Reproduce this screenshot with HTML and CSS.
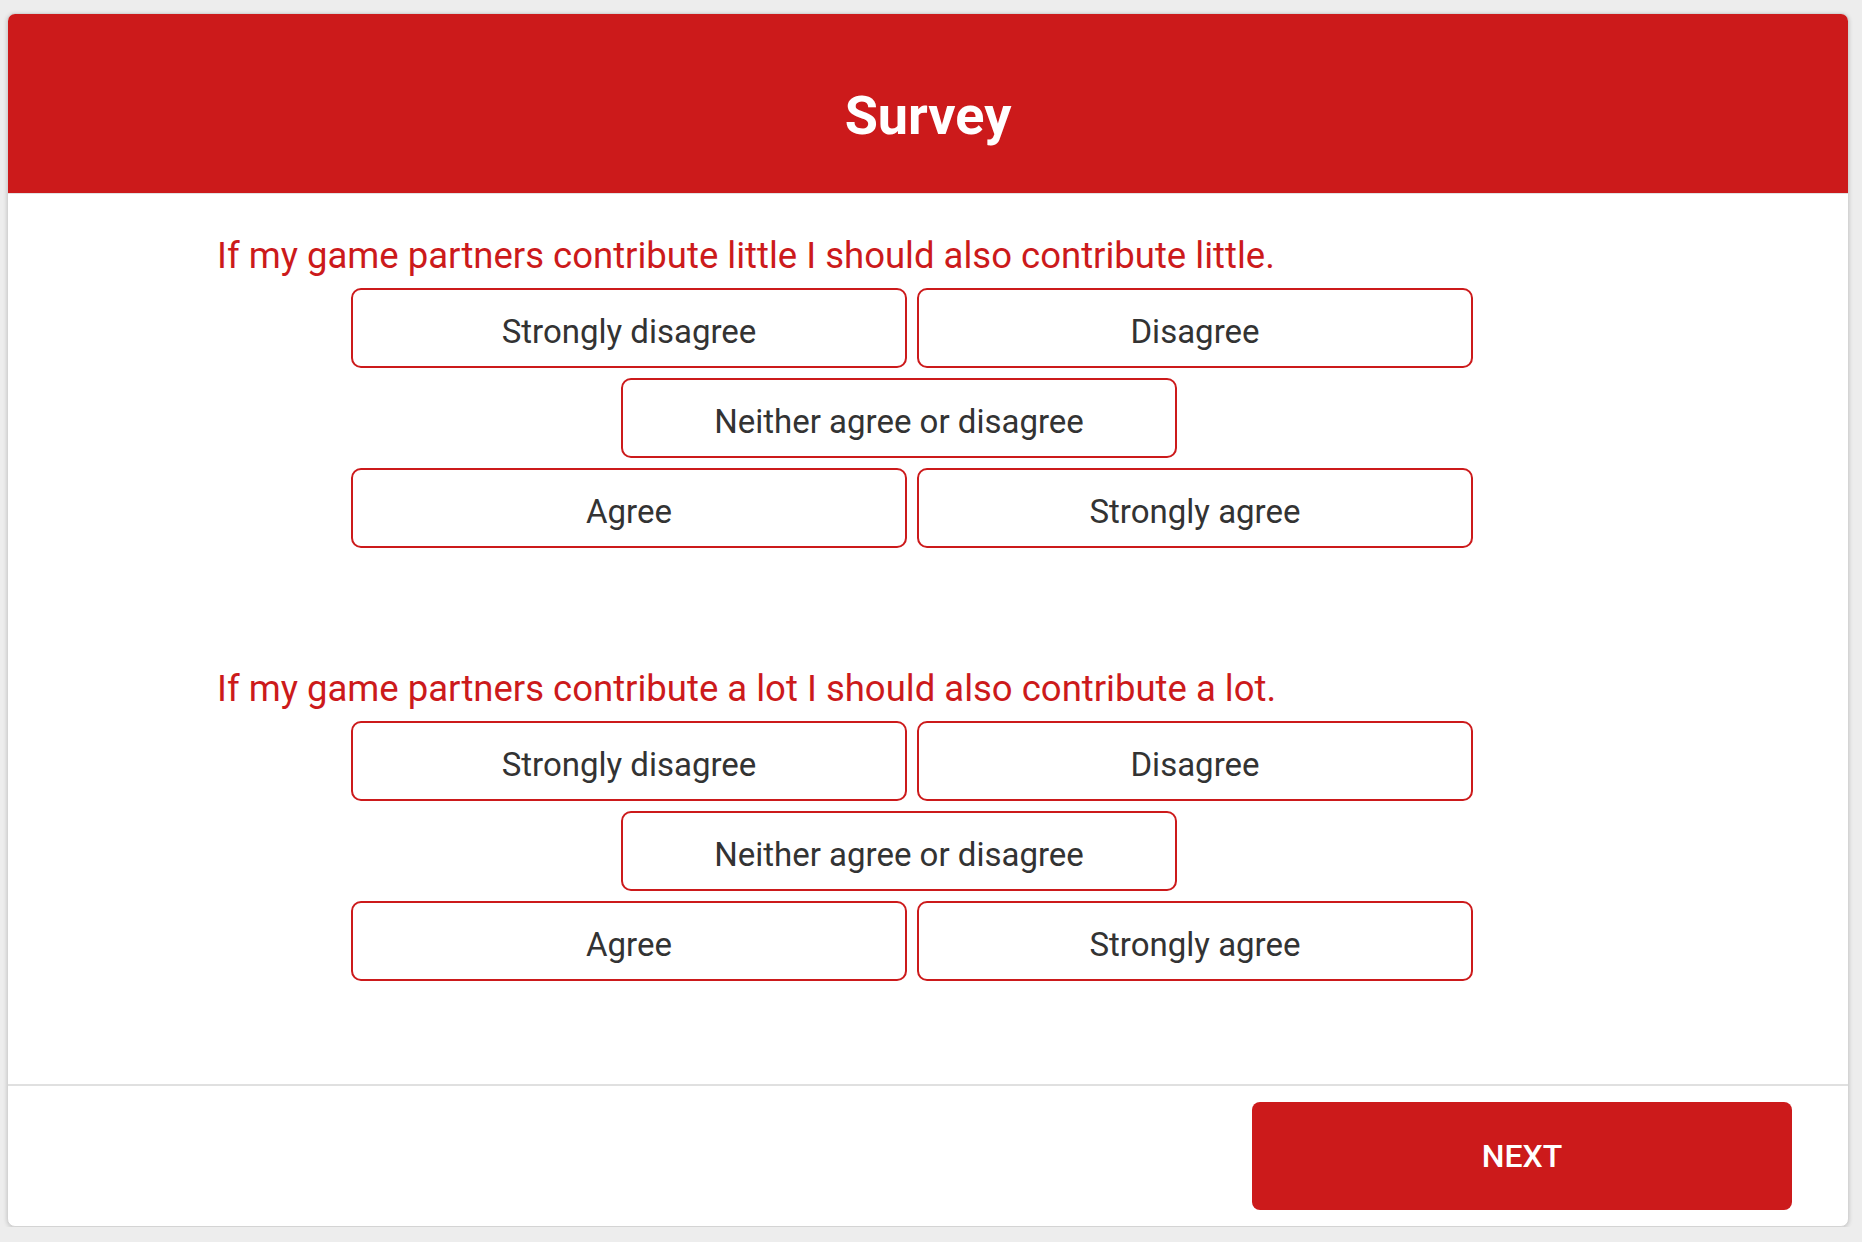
FILE: index.html
```html
<!DOCTYPE html>
<html lang="en">
<head>
<meta charset="utf-8">
<title>Survey</title>
<link rel="stylesheet" href="styles.css">
</head>
<body>
<div class="card">
  <header class="card-header">
    <h1 class="title">Survey</h1>
  </header>
  <main class="content">
    <section class="question">
      <p class="question-text">If my game partners contribute little I should also contribute little.</p>
      <div class="options">
        <button class="option">Strongly disagree</button>
        <button class="option">Disagree</button>
        <button class="option option-middle">Neither agree or disagree</button>
        <button class="option">Agree</button>
        <button class="option">Strongly agree</button>
      </div>
    </section>
    <section class="question question-next">
      <p class="question-text">If my game partners contribute a lot I should also contribute a lot.</p>
      <div class="options">
        <button class="option">Strongly disagree</button>
        <button class="option">Disagree</button>
        <button class="option option-middle">Neither agree or disagree</button>
        <button class="option">Agree</button>
        <button class="option">Strongly agree</button>
      </div>
    </section>
  </main>
  <footer class="card-footer">
    <button class="next-btn">NEXT</button>
  </footer>
</div>
</body>
</html>
```
FILE: styles.css
```css
html, body {
  margin: 0;
  padding: 0;
}
body {
  background: #ededed;
  font-family: Roboto, "Liberation Sans", Arial, sans-serif;
  padding-top: 13px;
}
.card {
  margin: 0 13px 0 7px;
  background: #ffffff;
  border: 1px solid #d4d4d4;
  border-radius: 8px;
  box-shadow: 0 1px 4px rgba(0, 0, 0, 0.18);
  overflow: hidden;
  display: flex;
  flex-direction: column;
}
.card-header {
  background: #cc1a1b;
  height: 180px;
  border-bottom: 1px solid #e2e2e2;
  box-sizing: border-box;
  padding-top: 70px;
  text-align: center;
}
.title {
  margin: 0;
  color: #ffffff;
  font-size: 54px;
  font-weight: 700;
  line-height: 63px;
}
.content {
  padding: 41px 0 103px 209px;
}
.question-text {
  margin: 0 0 12px 0;
  color: #cc1a1b;
  font-size: 36.5px;
  line-height: 41px;
  font-weight: 400;
}
.question-next {
  margin-top: 120px;
}
.options {
  margin-left: 134px;
  display: grid;
  grid-template-columns: 556px 556px;
  grid-auto-rows: 80px;
  column-gap: 10px;
  row-gap: 10px;
}
.option {
  box-sizing: border-box;
  height: 80px;
  background: #ffffff;
  border: 2px solid #cc1a1b;
  border-radius: 10px;
  font-family: Roboto, "Liberation Sans", Arial, sans-serif;
  font-size: 33px;
  color: #333333;
  padding: 6px 0 0 0;
  margin: 0;
}
.option-middle {
  grid-column: 1 / span 2;
  justify-self: start;
  width: 556px;
  margin-left: 270px;
}
.card-footer {
  border-top: 2px solid #e0e0e0;
  padding: 16px 56px 16px 0;
  display: flex;
  justify-content: flex-end;
}
.next-btn {
  width: 540px;
  height: 108px;
  background: #cc1a1b;
  color: #ffffff;
  border: none;
  border-radius: 8px;
  font-family: Roboto, "Liberation Sans", Arial, sans-serif;
  font-size: 32px;
  font-weight: 500;
  padding: 0;
}
```
